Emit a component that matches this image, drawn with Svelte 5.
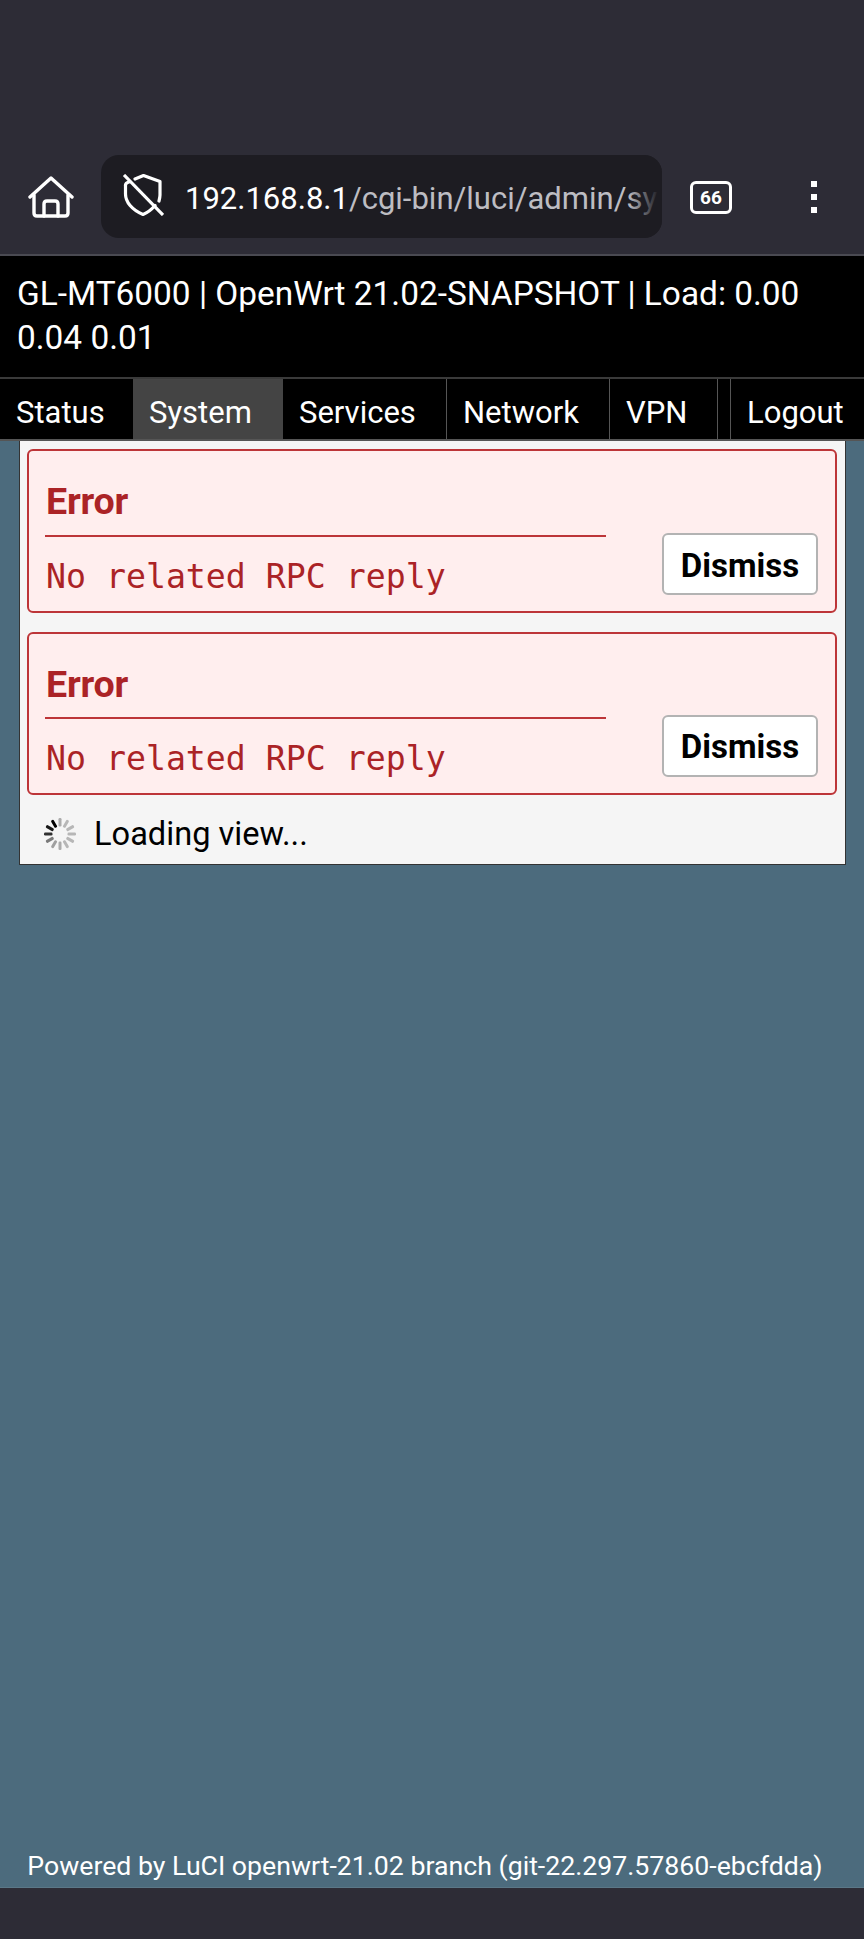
<script>
  const nav = [
    { label: 'Status', w: 133 },
    { label: 'System', w: 150, active: true },
    { label: 'Services', w: 164 },
    { label: 'Network', w: 163 },
    { label: 'VPN', w: 108 },
    { label: '', w: 13, spacer: true },
    { label: 'Logout', w: 133 }
  ];
  const ticks = Array.from({ length: 12 }, (_, i) => i);
  const opacity = [0.3, 0.25, 0.25, 0.25, 0.25, 0.25, 0.3, 0.35, 0.5, 0.8, 0.9, 1];
</script>

<div class="page">
  <div class="browser">
    <svg class="home" viewBox="0 0 46 42" width="46" height="42" fill="none" stroke="#fff" stroke-width="3.4" stroke-linejoin="round" stroke-linecap="round">
      <path d="M2 21 L23 2 L44 21" />
      <path d="M6 19 V37 Q6 40 9 40 H37 Q40 40 40 37 V19" />
      <path d="M16 40 V28 Q16 25 19 25 H27 Q30 25 30 28 V40" />
    </svg>
    <div class="url">
      <svg class="shield" viewBox="0 0 42 42" width="42" height="42" fill="none" stroke="#fff" stroke-width="3.2" stroke-linecap="round" stroke-linejoin="round">
        <path d="M7 8 Q3 9 3.5 12 V20 C3.5 28 10 36 21 40.5 C26 38.5 30 35 33 31.5 M13 5 L21.5 1.5 L38 7.5 V21 C38 23 37.5 25 37 27" />
        <path d="M2 1 L41 41" stroke-linecap="butt" />
      </svg>
      <div class="url-text"><span class="host">192.168.8.1</span>/cgi-bin/luci/admin/sys</div>
    </div>
    <div class="tabs">66</div>
    <div class="dots"><i></i><i></i><i></i></div>
  </div>

  <header class="title">GL-MT6000 | OpenWrt 21.02-SNAPSHOT | Load: 0.00 0.04 0.01</header>

  <nav class="nav">
    {#each nav as item}
      <div class="tab" class:active={item.active} class:spacer={item.spacer} style="width:{item.w}px">{item.label}</div>
    {/each}
  </nav>

  <main class="main">
    <section class="panel">
      {#each [0, 1] as n}
        <div class="alert">
          <div class="alert-body">
            <h4>Error</h4>
            <pre>No related RPC reply</pre>
          </div>
          <button class="dismiss">Dismiss</button>
        </div>
      {/each}
      <div class="loading">
        <svg class="spinner" viewBox="0 0 34 34" width="34" height="34">
          {#each ticks as t}
            <rect x="15.5" y="1" width="3" height="8.5" rx="1.2" fill="#000" opacity={opacity[t]} transform="rotate({t * 30} 17 17)" />
          {/each}
        </svg>
        <span>Loading view...</span>
      </div>
    </section>
    <footer class="foot">Powered by LuCI openwrt-21.02 branch (git-22.297.57860-ebcfdda)</footer>
  </main>

  <div class="bottom"></div>
</div>

<style>
  :global(body) {
    margin: 0;
    background: #2d2c36;
  }
  .page {
    width: 864px;
    height: 1939px;
    display: flex;
    flex-direction: column;
    font-family: Roboto, "Liberation Sans", sans-serif;
    overflow: hidden;
  }
  .browser {
    height: 256px;
    flex: none;
    box-sizing: border-box;
    padding: 155px 0 16px 28px;
    background: #2d2c36;
    border-bottom: 2px solid #4a4a52;
    display: flex;
    align-items: flex-start;
    color: #fff;
  }
  .home {
    margin-top: 21px;
    flex: none;
  }
  .url {
    position: relative;
    margin-left: 27px;
    width: 561px;
    height: 83px;
    box-sizing: border-box;
    border-radius: 18px;
    background: #1d1c22;
    display: flex;
    align-items: center;
    padding-left: 21px;
    overflow: hidden;
    flex: none;
  }
  .url::after {
    content: "";
    position: absolute;
    right: 0;
    top: 0;
    bottom: 0;
    width: 34px;
    background: linear-gradient(90deg, rgba(29, 28, 34, 0), #1d1c22 90%);
  }
  .shield {
    flex: none;
    margin-top: -4px;
  }
  .url-text {
    margin-left: 21px;
    font-size: 31px;
    white-space: nowrap;
    color: #bdbdc2;
    margin-top: 4px;
  }
  .host {
    color: #fff;
  }
  .tabs {
    margin: 26px 0 0 28px;
    width: 42px;
    height: 33px;
    box-sizing: border-box;
    border: 3px solid #fff;
    border-radius: 6px;
    display: flex;
    align-items: center;
    justify-content: center;
    font-size: 19px;
    font-weight: 700;
    flex: none;
  }
  .dots {
    margin: 26px 0 0 79px;
    display: flex;
    flex-direction: column;
    gap: 7px;
  }
  .dots i {
    width: 6px;
    height: 6px;
    background: #fff;
    display: block;
  }
  .title {
    flex: none;
    background: #000;
    color: #fff;
    font-size: 33.4px;
    line-height: 44px;
    height: 123px;
    box-sizing: border-box;
    padding: 16px 17px 0;
    border-bottom: 2px solid #3a3a3a;
  }
  .nav {
    flex: none;
    height: 62px;
    background: #000;
    display: flex;
    box-sizing: border-box;
    border-bottom: 2px solid #555;
  }
  .tab {
    box-sizing: border-box;
    flex: none;
    color: #fff;
    font-size: 31px;
    line-height: 58px;
    padding: 5px 0 0 16px;
    border-right: 1px solid #555;
    white-space: nowrap;
  }
  .tab:first-child {
    border-right: 0;
  }
  .tab.active {
    background: #444;
    border-right: 0;
  }
  .tab.spacer {
    padding: 0;
  }
  .tab:last-child {
    border-right: 0;
  }
  .main {
    flex: 1;
    background: #4c6b7d;
    display: flex;
    flex-direction: column;
    justify-content: space-between;
    box-shadow: inset 0 -1px 0 #5b7787;
  }
  .panel {
    margin: 0 18px 0 19px;
    background: #f5f5f5;
    border: solid #333;
    border-width: 0 1px 1px 1px;
    box-sizing: border-box;
    height: 424px;
    padding: 8px 8px 0 7px;
    display: flex;
    flex-direction: column;
    gap: 18.5px;
  }
  .alert {
    height: 164px;
    flex: none;
    box-sizing: border-box;
    background: #ffeeee;
    border: 2px solid #bd3538;
    border-radius: 6px;
    display: flex;
    align-items: flex-end;
    padding: 0 17px 16px 16px;
    color: #ab2326;
  }
  .alert + .alert {
    height: 163px;
  }
  .alert-body {
    width: 561px;
    flex: none;
    align-self: flex-start;
    margin-top: 28px;
  }
  h4 {
    margin: 0;
    font-size: 37.6px;
    font-weight: 700;
    line-height: 44px;
    height: 55.5px;
    border-bottom: 2px solid #bd3538;
    letter-spacing: -0.2px;
    padding-left: 1px;
  }
  pre {
    margin: 0;
    padding: 21px 0 0 1px;
    height: 42px;
    font-family: "DejaVu Sans Mono", "Liberation Mono", monospace;
    font-size: 33.2px;
    line-height: 38px;
  }
  .dismiss {
    margin: 0 0 0 56px;
    width: 157px;
    height: 62px;
    box-sizing: border-box;
    background: #fff;
    border: 2px solid #b3b3b3;
    border-radius: 6px;
    color: #000;
    font-family: Roboto, sans-serif;
    font-size: 33px;
    font-weight: 700;
    padding: 2px 0 0;
  }
  .loading {
    display: flex;
    align-items: center;
    height: 42px;
    font-size: 32.6px;
    color: #000;
    padding-left: 16px;
  }
  .spinner {
    flex: none;
  }
  .loading span {
    margin-left: 17px;
  }
  .foot {
    color: #fff;
    font-size: 26.7px;
    text-align: center;
    padding: 0 14px 7px 0;
    line-height: 30px;
  }
  .bottom {
    height: 51px;
    flex: none;
    background: #2d2c36;
  }
</style>
